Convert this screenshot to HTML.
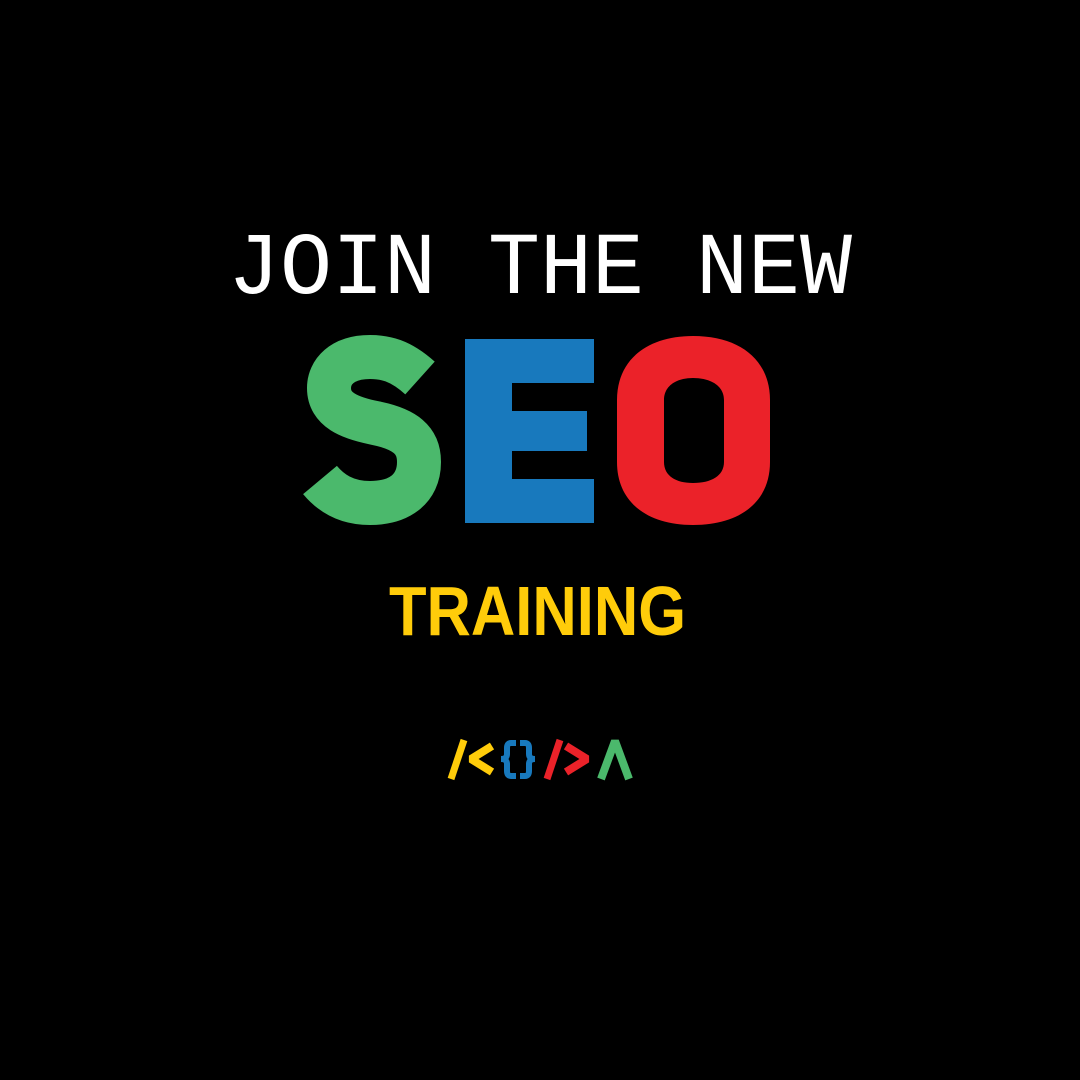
<!DOCTYPE html>
<html><head><meta charset="utf-8"><style>
html,body{margin:0;padding:0;background:#000;}
svg{display:block}
</style></head><body>
<svg width="1080" height="1080" viewBox="0 0 1080 1080" xmlns="http://www.w3.org/2000/svg">
<rect width="1080" height="1080" fill="#000"/>
<text x="228" y="293" font-family="Liberation Mono, monospace" font-size="88" fill="#fff" textLength="624" lengthAdjust="spacingAndGlyphs">JOIN THE NEW</text>
<!-- S -->
<path d="M420 378 C400 360 385 357 370 357 C342 357 329 372 329 388 C329 410 350 418 375 423 C405 429 419 440 419 462 C419 490 398 503 370 503 C345 503 330 492 320 480" fill="none" stroke="#4bb96c" stroke-width="44"/>
<!-- E -->
<path d="M465 339H594V383H512V411H587V451H512V479H594V523H465Z" fill="#1879bd"/>
<!-- O -->
<path fill-rule="evenodd" fill="#eb2229" d="M693 336C740 336 770 360 770 400V462C770 502 740 525 693 525C647 525 617 502 617 462V400C617 360 647 336 693 336ZM693 378C676 378 664 386 664 400V462C664 476 676 483 693 483C711 483 724 476 724 462V400C724 386 711 378 693 378Z"/>
<text x="389" y="635" font-family="Liberation Sans, sans-serif" font-weight="bold" font-size="70" fill="#ffcc0a" textLength="297" lengthAdjust="spacingAndGlyphs">TRAINING</text>
<!-- logo -->
<g fill="none" stroke-width="7" stroke-linejoin="bevel">
<path d="M451 779L464 740" stroke="#ffcc0a"/>
<path d="M492 746L471 759L492 772" stroke="#ffcc0a" stroke-width="8"/>
<path d="M516 743H511Q507 743 507 748V754Q507 759 501 759Q507 759 507 764V771Q507 776 511 776H516" stroke="#1879bd" stroke-width="6"/>
<path d="M520 743H525Q529 743 529 748V754Q529 759 535 759Q529 759 529 764V771Q529 776 525 776H520" stroke="#1879bd" stroke-width="6"/>
<path d="M547 779L560 740" stroke="#eb2229"/>
<path d="M566 746L587 759L566 772" stroke="#eb2229" stroke-width="8"/>
<path d="M601 779L615 741L629 779" stroke="#4bb96c" stroke-width="8"/>
</g>
</svg>
</body></html>
